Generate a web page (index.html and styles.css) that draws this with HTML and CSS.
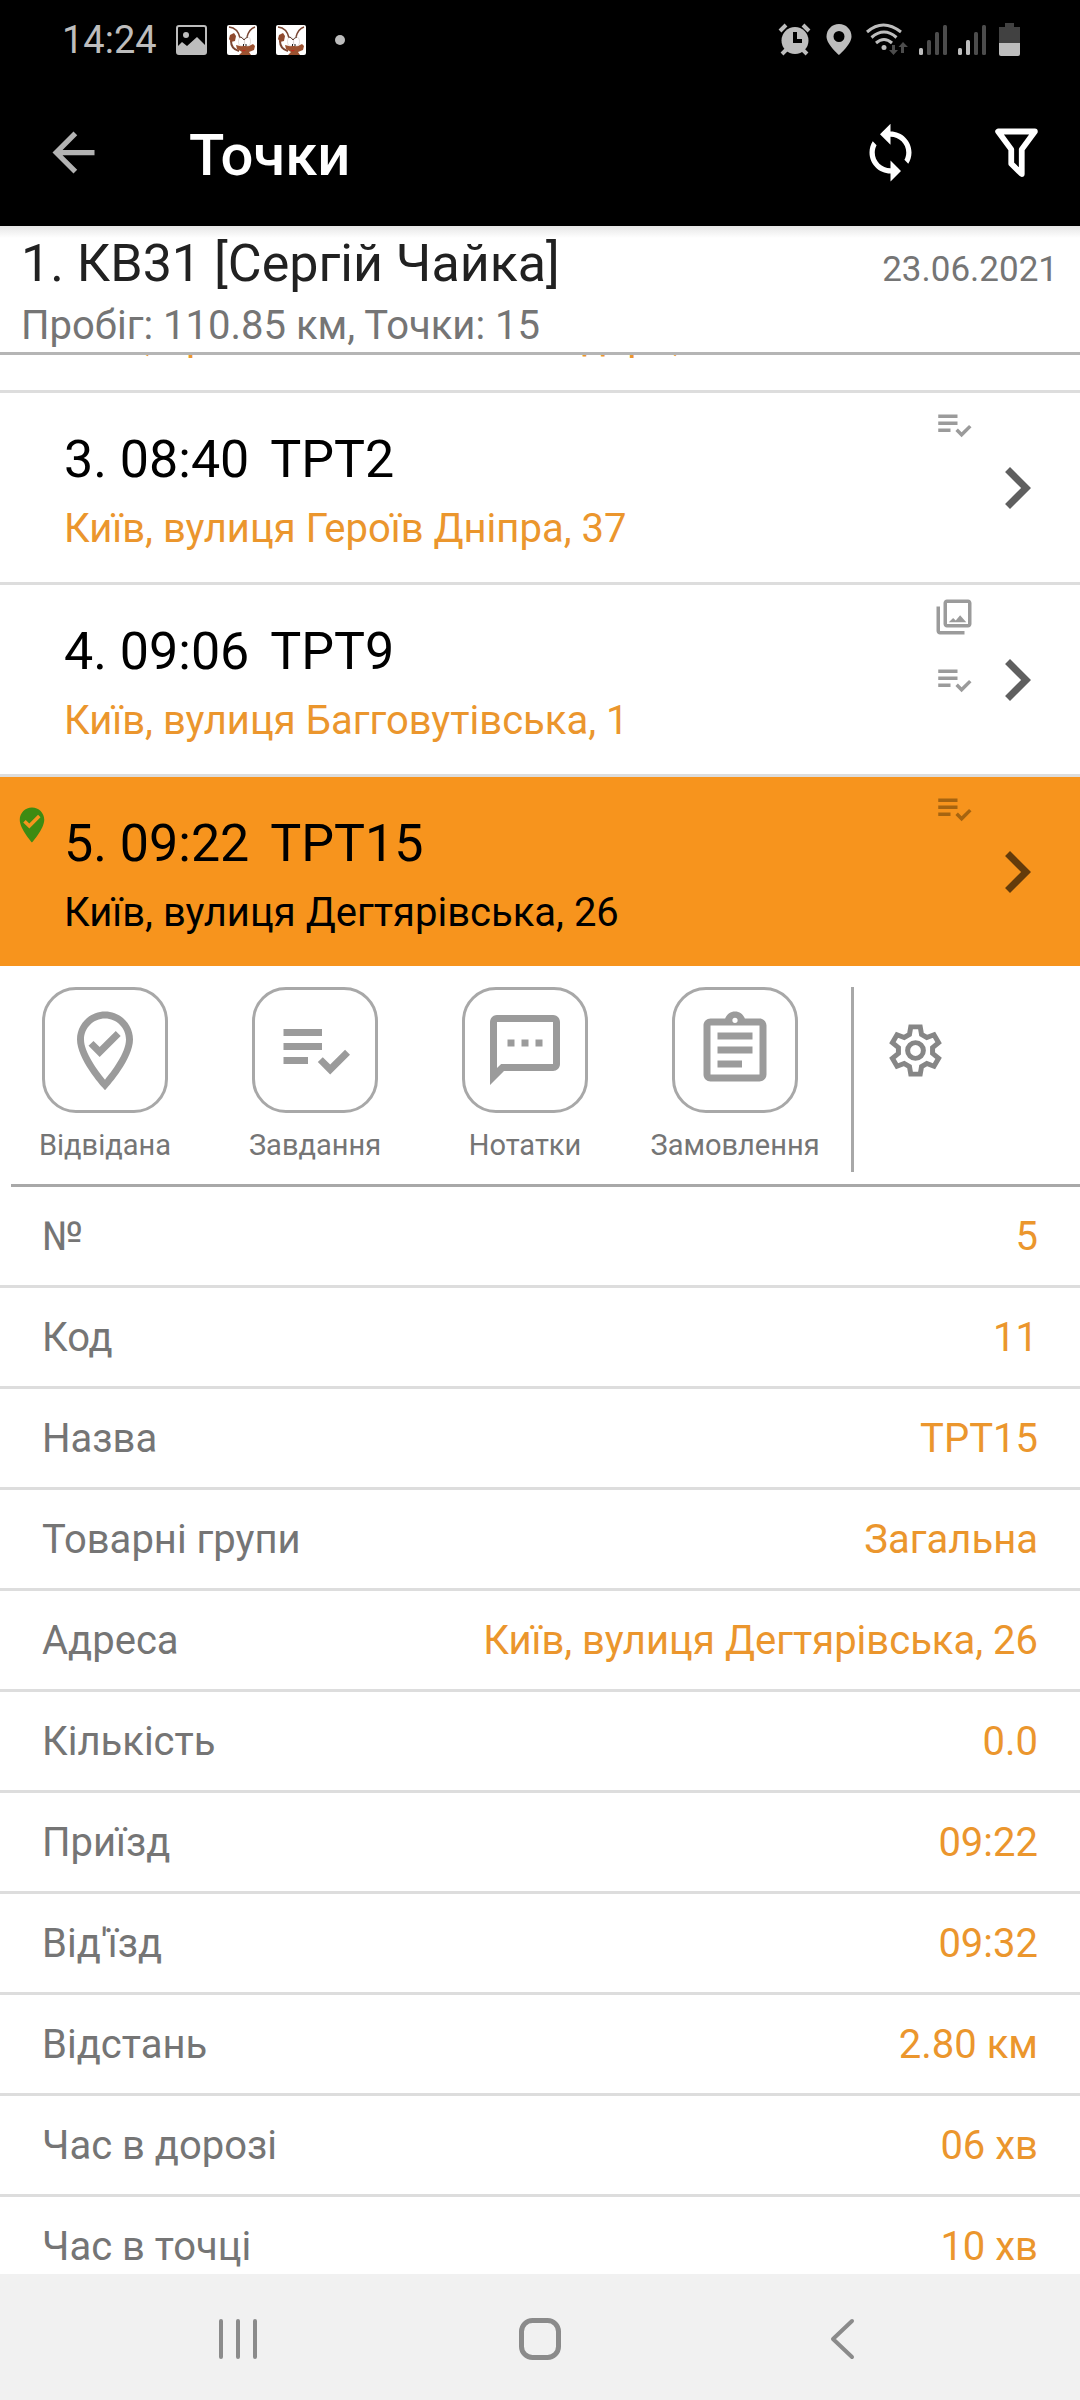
FILE: index.html
```html
<!DOCTYPE html>
<html lang="uk">
<head>
<meta charset="utf-8">
<meta name="viewport" content="width=device-width, initial-scale=1">
<title>Точки</title>
<link rel="stylesheet" href="styles.css">
</head>
<body>
<svg class="defs" width="0" height="0" aria-hidden="true">
  <symbol id="tasks" viewBox="0 0 24 24"><path d="M3 10h11v2H3zM3 6h11v2H3zM3 14h7v2H3zM20.59 11.93l-4.25 4.24-2.12-2.12-1.41 1.41 3.53 3.54 5.66-5.66z"/></symbol>
  <symbol id="chevron" viewBox="0 0 24 24"><path d="M10 6L8.59 7.41 13.17 12l-4.58 4.59L10 18l6-6z"/></symbol>
  <symbol id="gallery" viewBox="0 0 24 24"><path d="M20 4v12H8V4h12m0-2H8c-1.1 0-2 .9-2 2v12c0 1.1.9 2 2 2h12c1.1 0 2-.9 2-2V4c0-1.1-.9-2-2-2zM11.500 12.500l1.500 1.500 2.500-3L19 15H9zM2 6v14c0 1.100.9 2 2 2h14v-2H4V6H2z"/></symbol>
  <symbol id="ant" viewBox="0 0 30 30">
    <rect width="30" height="30" rx="2" fill="#fff"/>
    <path d="M2 2q9 1 11 11M28 2q-6 2-8 10" fill="none" stroke="#7a4632" stroke-width="1.500"/>
    <path d="M4 16q0 8 8 10" fill="none" stroke="#7a4632" stroke-width="2"/>
    <path d="M3 10l4-2 2 3-1 5-4 1-2-3z" fill="#8f4a2e"/>
    <path d="M9 20l4 1h9l4-2 2 2-1 4-5 2 2 3H12l3-3-5-3z" fill="#9c5230"/>
    <ellipse cx="14.500" cy="16.500" rx="3" ry="4.500" fill="#fff" stroke="#cfc4bf" stroke-width=".6"/>
    <ellipse cx="20.500" cy="16.500" rx="3" ry="4.500" fill="#fff" stroke="#cfc4bf" stroke-width=".6"/>
    <path d="M13 12q2 0 4 3 1-2 4-3" fill="none" stroke="#5b3a2c"/>
    <path d="M16 19h1v2h-1zM18.500 19h1v2h-1z" fill="#222"/>
    <path d="M14 25h5l-2 1.500z" fill="#c22a1e"/>
  </symbol>
</svg>

<div class="screen">
  <div class="status">
    <div class="status-left">
      <span class="clock">14:24</span>
      <svg class="notice" viewBox="0 0 32 30"><rect x="1" y="1" width="29" height="28" rx="2" fill="none" stroke="#bdbdbd" stroke-width="2"/><circle cx="10" cy="10" r="3"/><path d="M2 21l4-4 5 4 10-9 8 8v9H2z"/></svg>
      <svg class="app-ant" viewBox="0 0 30 30"><use href="#ant"/></svg>
      <svg class="app-ant" viewBox="0 0 30 30"><use href="#ant"/></svg>
      <span class="dot"></span>
    </div>
    <svg class="status-right" viewBox="0 0 244 34" fill="#bdbdbd">
      <g stroke="#bdbdbd" fill="none" stroke-width="4"><path d="M2 8l6-6M31 8l-6-6M4 31l6-6M29 31l-6-6"/></g>
      <circle cx="17" cy="17.500" r="13.500"/><path d="M17 9v9h7" fill="none" stroke="#000" stroke-width="4"/>
      <path fill-rule="evenodd" d="M61 1c-7 0-12.500 5.500-12.500 12.500 0 8 12.500 18.500 12.500 18.500s12.500-10.500 12.500-18.500C73.500 6.500 68 1 61 1zm0 7a5.500 5.500 0 1 1 0 11 5.500 5.500 0 0 1 0-11z"/>
      <g fill="none" stroke="#bdbdbd" stroke-width="3"><path d="M89 9q16-14 34 0M93.500 14.500q12.500-11 25 0M98 20q8-7 16 0"/></g>
      <circle cx="106" cy="24.500" r="2.500"/>
      <path d="M114 22h3v5h3l-4.500 5-4.500-5h3zM123 30h3v-6h4l-5-5-4.500 5h2.500z" fill="#4c4c4c"/>
      <g fill="#4c4c4c"><rect x="149" y="17" width="4" height="15" rx="1.500"/><rect x="157" y="9" width="4" height="23" rx="1.500"/><rect x="165" y="2" width="4" height="30" rx="1.500"/><rect x="196" y="9" width="4" height="23" rx="1.500"/><rect x="204" y="2" width="4" height="30" rx="1.500"/></g>
      <rect x="141" y="25" width="4" height="7" rx="1.500"/><rect x="180" y="25" width="4" height="7" rx="1.500"/><rect x="188" y="17" width="4" height="15" rx="1.500"/>
      <path d="M227 0h9v4h6v16h-21V4h6z" fill="#414141"/><path d="M221 20h21v11q0 2-2 2h-17q-2 0-2-2z"/>
    </svg>
  </div>

  <header class="appbar">
    <button class="icon-btn back" aria-label="Назад"><svg viewBox="0 0 24 24"><path d="M20 11H7.830l5.590-5.590L12 4l-8 8 8 8 1.410-1.410L7.830 13H20v-2z"/></svg></button>
    <h1 class="appbar-title">Точки</h1>
    <button class="icon-btn" aria-label="Оновити"><svg viewBox="0 0 24 24"><path d="M12 4V1L8 5l4 4V6c3.310 0 6 2.690 6 6 0 1.010-.250 1.970-.700 2.800l1.460 1.460C19.540 15.030 20 13.570 20 12c0-4.420-3.580-8-8-8zm0 14c-3.310 0-6-2.690-6-6 0-1.010.250-1.970.700-2.800L5.240 7.740C4.460 8.970 4 10.430 4 12c0 4.420 3.580 8 8 8v3l4-4-4-4v3z"/></svg></button>
    <button class="icon-btn" aria-label="Фільтр"><svg class="outline" viewBox="0 0 24 24"><path d="M5 4h14l-5 6.800V20.200l-4-3.900V10.800z" stroke-width="2.200" stroke-linejoin="round"/></svg></button>
  </header>

  <section class="route">
    <div class="route-top"><h2 class="route-name">1. КВ31 [Сергій Чайка]</h2><span class="route-date">23.06.2021</span></div>
    <div class="route-info">Пробіг: 110.85 км, Точки: 15</div>
  </section>

  <main class="content">
    <ul class="points">
      <li class="point point-scrolled"><span class="point-address">Київ, проспект Степана Бандери, 2</span></li>
      <li class="point">
        <div class="point-text"><span class="point-title">3. 08:40 <span class="point-name">ТРТ2</span></span><span class="point-address">Київ, вулиця Героїв Дніпра, 37</span></div>
        <div class="marks"><svg viewBox="0 0 24 24"><use href="#tasks"/></svg></div>
        <svg class="chevron" viewBox="0 0 24 24"><use href="#chevron"/></svg>
      </li>
      <li class="point">
        <div class="point-text"><span class="point-title">4. 09:06 <span class="point-name">ТРТ9</span></span><span class="point-address">Київ, вулиця Багговутівська, 1</span></div>
        <div class="marks"><svg viewBox="0 0 24 24"><use href="#gallery"/></svg><svg viewBox="0 0 24 24"><use href="#tasks"/></svg></div>
        <svg class="chevron" viewBox="0 0 24 24"><use href="#chevron"/></svg>
      </li>
      <li class="point point-active">
        <svg class="visited" viewBox="0 0 24 24"><path d="M12 2C8.140 2 5 5.140 5 9c0 5.250 7 13 7 13s7-7.750 7-13c0-3.860-3.140-7-7-7zm-1.530 12l-3.480-3.480L8.400 9.100l2.060 2.060 4.990-4.990 1.410 1.410z"/></svg>
        <div class="point-text"><span class="point-title">5. 09:22 <span class="point-name">ТРТ15</span></span><span class="point-address">Київ, вулиця Дегтярівська, 26</span></div>
        <div class="marks"><svg viewBox="0 0 24 24"><use href="#tasks"/></svg></div>
        <svg class="chevron" viewBox="0 0 24 24"><use href="#chevron"/></svg>
      </li>
    </ul>

    <div class="actions">
      <button class="action"><span class="action-box"><svg viewBox="0 0 24 24"><path d="M12 1C7.590 1 4 4.590 4 9c0 5.570 6.960 13.340 7.260 13.670l.740.820.740-.820C13.040 22.340 20 14.570 20 9c0-4.410-3.590-8-8-8zm0 19.470C9.820 17.860 6 12.540 6 9c0-3.310 2.690-6 6-6s6 2.690 6 6c0 3.830-4.250 9.360-6 11.470zm-1.530-9.300L8.710 9.400l-1.420 1.420L10.470 14l6.010-6.010-1.410-1.420z"/></svg></span>Відвідана</button>
      <button class="action"><span class="action-box"><svg viewBox="0 0 24 24"><use href="#tasks"/></svg></span>Завдання</button>
      <button class="action"><span class="action-box"><svg viewBox="0 0 24 24"><path d="M20 2H4c-1.100 0-2 .900-2 2v18l4-4h14c1.100 0 2-.900 2-2V4c0-1.100-.900-2-2-2zm0 14H5.170L4 17.170V4h16v12zM7 9h2v2H7zm4 0h2v2h-2zm4 0h2v2h-2z"/></svg></span>Нотатки</button>
      <button class="action"><span class="action-box"><svg viewBox="0 0 24 24"><path fill-rule="evenodd" d="M7 15h7v2H7zM7 11h10v2H7zM7 7h10v2H7zM19 3h-4.180C14.400 1.840 13.300 1 12 1s-2.400.840-2.820 2H5c-1.100 0-2 .900-2 2v14c0 1.100.900 2 2 2h14c1.100 0 2-.900 2-2V5c0-1.100-.900-2-2-2zm-7-.250a.750.750 0 1 1 0 1.500.750.750 0 0 1 0-1.500zM19 19H5V5h14v14z"/></svg></span>Замовлення</button>
      <button class="settings" aria-label="Налаштування"><svg class="outline" viewBox="0 0 24 24"><circle cx="12" cy="12" r="3" stroke-width="1.900"/><path d="M10.200 3h3.600l.500 2.900 2 1.150 2.750-1.050 1.750 3.050-2.300 1.850v2.200l2.300 1.850-1.750 3.050-2.750-1.050-2 1.150-.500 2.900h-3.600l-.500-2.900-2-1.150-2.750 1.050-1.750-3.050 2.300-1.850v-2.200L3.200 9.050l1.750-3.050 2.750 1.050 2-1.150z" stroke-width="1.900"/></svg></button>
    </div>

    <table class="details">
      <tbody>
        <tr><th scope="row">№</th><td>5</td></tr>
        <tr><th scope="row">Код</th><td>11</td></tr>
        <tr><th scope="row">Назва</th><td>ТРТ15</td></tr>
        <tr><th scope="row">Товарні групи</th><td>Загальна</td></tr>
        <tr><th scope="row">Адреса</th><td>Київ, вулиця Дегтярівська, 26</td></tr>
        <tr><th scope="row">Кількість</th><td>0.0</td></tr>
        <tr><th scope="row">Приїзд</th><td>09:22</td></tr>
        <tr><th scope="row">Від'їзд</th><td>09:32</td></tr>
        <tr><th scope="row">Відстань</th><td>2.80 км</td></tr>
        <tr><th scope="row">Час в дорозі</th><td>06 хв</td></tr>
        <tr><th scope="row">Час в точці</th><td>10 хв</td></tr>
      </tbody>
    </table>
  </main>

  <nav class="navbar">
    <button aria-label="Останні"><svg class="outline" viewBox="0 0 44 44" stroke-width="4" stroke-linecap="round"><path d="M5 4v36M22 4v36M39 4v36"/></svg></button>
    <button aria-label="Головна"><svg class="outline" viewBox="0 0 44 44" stroke-width="5"><rect x="3.500" y="3.500" width="37" height="37" rx="11"/></svg></button>
    <button aria-label="Назад"><svg class="outline" viewBox="0 0 44 44" stroke-width="4" stroke-linecap="round" stroke-linejoin="round"><path d="M32 4L13 22l19 18"/></svg></button>
  </nav>
</div>
</body>
</html>
```
FILE: styles.css
```css
* { box-sizing: border-box; }

body {
  margin: 0;
  background: #fff;
  font-family: Roboto, "Noto Sans", sans-serif;
  color: #757575;
}

h1, h2, ul { margin: 0; padding: 0; font-weight: 400; }

button {
  margin: 0;
  padding: 0;
  border: 0;
  background: none;
  font: inherit;
  color: inherit;
}

svg { display: block; flex: none; fill: currentColor; }
.outline { fill: none; stroke: currentColor; }

.defs { position: absolute; }

.screen {
  display: flex;
  flex-direction: column;
  height: 100vh;
  overflow: hidden;
}

/* Status bar */
.status {
  display: flex;
  justify-content: space-between;
  align-items: center;
  height: 80px;
  flex: none;
  padding: 0 58px 0 62px;
  background: #000;
  color: #bdbdbd;
}

.status-left { display: flex; align-items: center; gap: 19px; }
.clock { font-size: 38px; line-height: 48px; }
.notice { width: 32px; height: 30px; }
.app-ant { width: 30px; height: 30px; }
.dot { width: 10px; height: 10px; margin-left: 10px; border-radius: 50%; background: #bdbdbd; }
.status-right { width: 244px; height: 34px; }

/* App bar */
.appbar {
  display: flex;
  align-items: center;
  height: 146px;
  flex: none;
  padding: 0 32px 2px 42px;
  background: #000;
  color: #fff;
}

.icon-btn svg { width: 63px; height: 63px; }
.icon-btn + .icon-btn { margin-left: 63px; }
.back { color: #b3b3b3; margin-right: 84px; }
.appbar-title { flex: 1; padding-top: 6px; font-size: 58px; font-weight: 500; line-height: 68px; }

/* Route summary */
.route {
  flex: none;
  height: 129px;
  padding: 7px 22px 0 21px;
  border-bottom: 3px solid #b5b5b5;
  background: linear-gradient(#e6e6e6, #fff 12px);
}

.route-top { display: flex; justify-content: space-between; align-items: baseline; }
.route-name { font-size: 52px; line-height: 62px; color: #212121; }
.route-date { font-size: 35px; line-height: 40px; }
.route-info { font-size: 40px; line-height: 62px; }

.content { flex: 1; min-height: 0; overflow: hidden; }

/* Points */
.points { list-style: none; }

.point {
  position: relative;
  display: flex;
  align-items: center;
  height: 192px;
  padding: 0 21px 0 64px;
  border-bottom: 3px solid #ddd;
  color: #5f5f5f;
}

/* The previous point is almost wholly scrolled under the summary */
.point-scrolled { align-items: flex-end; height: 38px; padding-bottom: 27px; }

.point-text { flex: 1; display: flex; flex-direction: column; gap: 11px; padding-top: 8px; }
.point-title { font-size: 52px; line-height: 64px; color: #000; }
.point-name { margin-left: 8px; }
.point-address { font-size: 40px; line-height: 52px; color: #eb962d; }

.marks {
  align-self: flex-start;
  display: flex;
  flex-direction: column;
  gap: 21px;
  padding-top: 11px;
  color: #9b9b9b;
}

.marks svg { width: 42px; height: 42px; }
.chevron { width: 84px; height: 84px; }

.point-active {
  height: 189px;
  border-bottom: 0;
  background: #f7941d;
  color: #633b0b;
}

.point-active .point-address { color: #000; }
.point-active .marks { color: #a66410; }
.visited { position: absolute; left: 11px; top: 27px; width: 42px; height: 42px; color: #3d8b12; }

/* Actions */
.actions {
  display: flex;
  height: 221px;
  margin-left: 11px;
  padding: 21px 0 12px;
  border-bottom: 3px solid #a8a8a8;
}

.action {
  display: flex;
  flex-direction: column;
  align-items: center;
  flex: none;
  gap: 15px;
  width: 210px;
  font-size: 29px;
  line-height: 34px;
}

.action:first-child { margin-left: -11px; }

.action-box {
  display: flex;
  align-items: center;
  justify-content: center;
  width: 126px;
  height: 126px;
  border: 3px solid #a8a8a8;
  border-radius: 34px;
  color: #9b9b9b;
}

.action-box svg { width: 84px; height: 84px; }

.settings {
  display: flex;
  align-items: flex-start;
  margin-left: 11px;
  padding: 32px 30px 0;
  border-left: 3px solid #a8a8a8;
  color: #868686;
}

.settings svg { width: 63px; height: 63px; }

/* Details */
.details { width: 100%; border-spacing: 0; font-size: 40px; line-height: 50px; }
.details th, .details td { height: 101px; padding: 2px 42px 0; border-bottom: 3px solid #ddd; }
.details th { font-weight: 400; text-align: left; }
.details td { text-align: right; color: #eb962d; }

/* System navigation */
.navbar {
  display: flex;
  justify-content: center;
  gap: 258px;
  align-items: center;
  flex: none;
  height: 126px;
  padding-top: 4px;
  background: #f1f1f1;
  color: #8b8b8b;
}

.navbar svg { width: 44px; height: 44px; }
```
